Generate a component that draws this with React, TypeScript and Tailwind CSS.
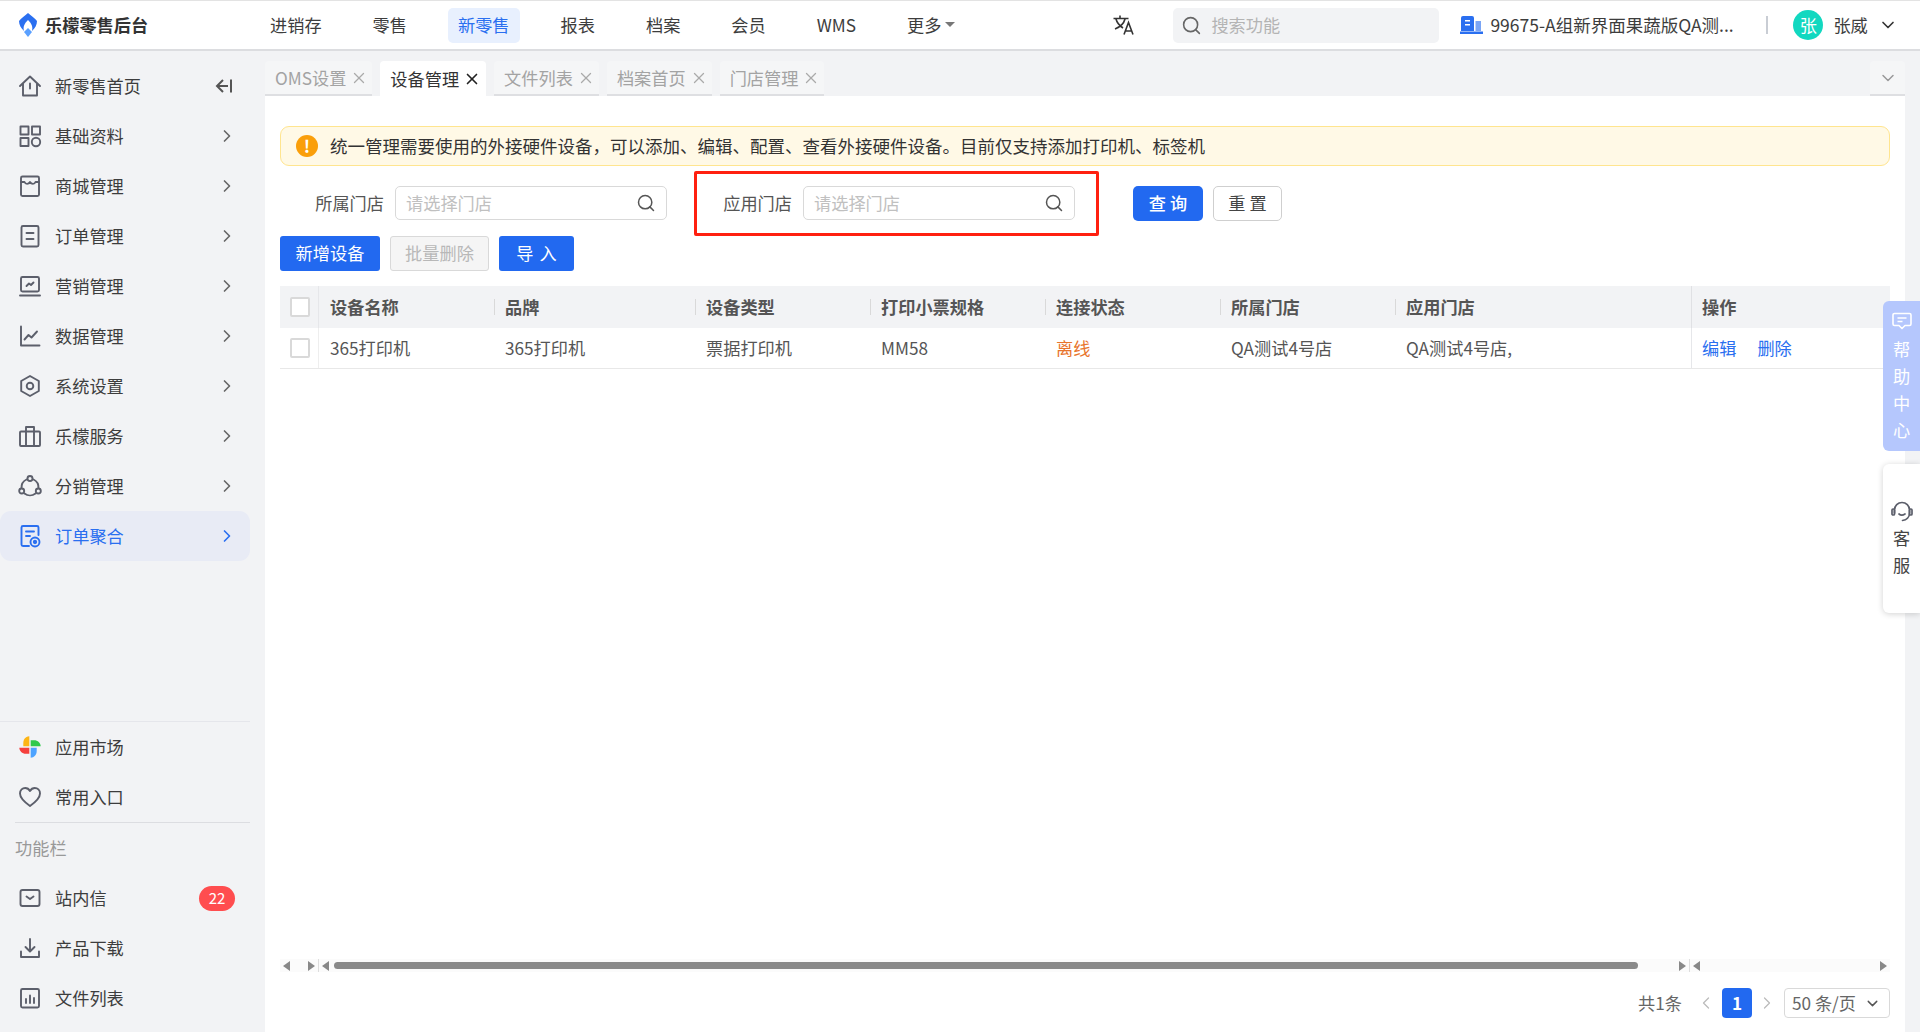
import { ReactNode } from "react";
import { ChevronDown, ChevronLeft, ChevronRight, Search, X } from "lucide-react";

const Icon = ({ children, className = "text-[#5c5f6b]", size = 24 }: { children: ReactNode; className?: string; size?: number }) => (
  <svg width={size} height={size} viewBox="0 0 24 24" fill="none" stroke="currentColor" strokeWidth="1.9" strokeLinejoin="round" strokeLinecap="round" className={className}>
    {children}
  </svg>
);

const icons: Record<string, ReactNode> = {
  home: (<><path d="M2 12 12 2.5 22 12" /><path d="M5 10v11.5h14V10" /><path d="M12 9.5v5" /></>),
  grid: (<><rect x="2.5" y="2.5" width="8" height="8" /><rect x="14" y="2.5" width="8" height="8" /><rect x="2.5" y="14" width="8" height="8" /><circle cx="18" cy="18" r="4.2" /></>),
  shop: (<><rect x="3" y="2.5" width="18" height="19.5" rx="1.5" /><path d="M3 8h3.5c1 2.5 4 2.5 5.5 0 1.5 2.5 4.5 2.5 5.5 0H21" /></>),
  order: (<><rect x="3.5" y="2" width="17" height="20.5" rx="1.5" /><path d="M8.5 9h7M8.5 15h7" /></>),
  market: (<><rect x="3" y="3" width="18" height="14.5" rx="1.5" /><path d="M2 21.5h20" /><path d="m8.5 12 2.5-2.5 2 1.5 2.5-2.5" /></>),
  data: (<><path d="M3 2.5V21.5h18.5" /><path d="m6.5 15.5 4-4.5 3 2.5 5.5-6" /></>),
  setting: (<><path d="M12 2 20.8 7v10L12 22 3.2 17V7z" /><circle cx="12" cy="12" r="3.3" /></>),
  service: (<><rect x="2" y="7.5" width="20" height="14.5" rx="1" /><path d="M8 7.5V3h8v4.5M8 7.5V22M16 7.5V22" /></>),
  share: (<><path d="M8.5 5.5a9 9 0 0 0-5 8.5M15.5 5.5a9 9 0 0 1 5 8.5M6.5 19.5a9 9 0 0 0 11 0" /><circle cx="12" cy="4.5" r="2.5" /><circle cx="3.7" cy="17" r="2.5" /><circle cx="20.3" cy="17" r="2.5" /></>),
  heart: (<path d="M12 21C5 16 2 12.5 2 8.5 2 5 4.5 3 7.2 3c2 0 3.7 1 4.8 3 1.1-2 2.8-3 4.8-3C19.5 3 22 5 22 8.5c0 4-3 7.5-10 12.5z" />),
  mail: (<><rect x="2.5" y="4" width="19" height="16" rx="2" /><path d="m8.5 10.5 3.5 2.5 3.5-2.5" /></>),
  download: (<><path d="M12 3v12M7.5 11l4.5 4.5 4.5-4.5" /><path d="M3 15.5V21h18v-5.5" /></>),
  chart: (<><rect x="3" y="3" width="18" height="18.5" rx="1.5" /><path d="M8 13v4M12 9.5V17M16 12v5" /></>),
};

const Aggregate = () => (
  <Icon className="text-[#2a6ff0]">
    <path d="M11 22H5a1.5 1.5 0 0 1-1.5-1.5v-17A1.5 1.5 0 0 1 5 2h14a1.5 1.5 0 0 1 1.5 1.5V11" />
    <path d="M8 7.5h8M8 12h4" />
    <circle cx="17" cy="18" r="4.5" />
    <circle cx="17" cy="18" r="1.2" fill="currentColor" />
  </Icon>
);

const Pinwheel = () => (
  <svg width="24" height="24" viewBox="0 0 24 24">
    <path d="M11.3 1.3C7 1.5 5.3 5 5.3 8v3.3h6z" fill="#fdb515" />
    <path d="M12.7 5.3H16c4 0 6.5 2.7 6.7 6h-10z" fill="#2fc94a" />
    <path d="M1.3 12.7h10v6H8c-4 0-6.5-2.7-6.7-6z" fill="#f5403d" />
    <path d="M12.7 12.7h6V16c0 4-2.7 6.5-6 6.7z" fill="#4da3ff" />
  </svg>
);

const menu = [
  { label: "基础资料", icon: "grid" },
  { label: "商城管理", icon: "shop" },
  { label: "订单管理", icon: "order" },
  { label: "营销管理", icon: "market" },
  { label: "数据管理", icon: "data" },
  { label: "系统设置", icon: "setting" },
  { label: "乐檬服务", icon: "service" },
  { label: "分销管理", icon: "share" },
];

const navs = ["进销存", "零售", "新零售", "报表", "档案", "会员", "WMS"];
const tabs = ["OMS设置", "设备管理", "文件列表", "档案首页", "门店管理"];

const Row = ({ icon, label, children }: { icon: ReactNode; label: string; children?: ReactNode }) => (
  <div className="flex h-[50px] w-[250px] items-center pl-[18px] pr-[13px]">
    <span className="flex w-[24px] justify-center">{icon}</span>
    <span className="ml-[13px] flex-1 text-[#3d3d3d]">{label}</span>
    {children}
  </div>
);

const Arrow = () => <ChevronRight size={20} strokeWidth={2} className="text-[#666]" />;

const Sidebar = () => (
  <aside className="flex w-[265px] shrink-0 flex-col pt-[10px]">
    <Row icon={<Icon>{icons.home}</Icon>} label="新零售首页">
      <svg width="18" height="16" viewBox="0 0 18 16" fill="none" stroke="#555" strokeWidth="2" className="mr-[4px]">
        <path d="M8 2 2 8l6 6M2 8h11M16 1.5v13" />
      </svg>
    </Row>
    {menu.map((m) => (
      <Row key={m.label} icon={<Icon>{icons[m.icon]}</Icon>} label={m.label}>
        <Arrow />
      </Row>
    ))}
    <div className="flex h-[50px] w-[250px] items-center rounded-[11px] bg-[#e8ebf5] pl-[18px] pr-[13px]">
      <span className="flex w-[24px] justify-center"><Aggregate /></span>
      <span className="ml-[13px] flex-1 text-[#2a6ff0]">订单聚合</span>
      <ChevronRight size={20} strokeWidth={2} className="text-[#2a6ff0]" />
    </div>
    <div className="mt-auto w-[250px] border-t border-[#e5e6eb]">
      <Row icon={<Pinwheel />} label="应用市场" />
      <Row icon={<Icon>{icons.heart}</Icon>} label="常用入口" />
    </div>
    <div className="ml-[15px] w-[235px] border-t border-[#dcdde1] pt-[12px] pb-[12px] leading-[26px] text-[#999]">功能栏</div>
    <Row icon={<Icon>{icons.mail}</Icon>} label="站内信">
      <span className="mr-[2px] flex h-[25px] w-[36px] items-center justify-center rounded-full bg-[#ff4d4f] text-[15px] text-white">22</span>
    </Row>
    <Row icon={<Icon>{icons.download}</Icon>} label="产品下载" />
    <div className="mb-[9px]">
      <Row icon={<Icon>{icons.chart}</Icon>} label="文件列表" />
    </div>
  </aside>
);

const Header = () => (
  <header className="flex h-[51px] shrink-0 items-center border-t border-b-2 border-t-[#e3e3e3] border-b-[#dcdde0] bg-white">
    <div className="flex w-[260px] items-center pl-[19px]">
      <svg width="18" height="24" viewBox="0 0 18 24">
        <path d="M9 0c3 3 7 5 9 8 0 4-2 7-5 10 1-4 0-7-4-11-4 4-5 7-4 11-3-3-5-6-5-10 2-3 6-5 9-8z" fill="#2a6ff0" />
        <path d="M9 15l4 4-4 5-4-5z" fill="#5aa0ff" />
      </svg>
      <span className="ml-[8px] font-bold text-[#333]">乐檬零售后台</span>
    </div>
    <nav className="flex items-center gap-[31px]">
      {navs.map((n) => (
        <span key={n} className={n === "新零售" ? "flex h-[35px] items-center rounded-[5px] bg-[#e8f0fe] px-[10px] text-[#2a6ff0]" : "flex h-[35px] items-center px-[10px] text-[#3d3d3d]"}>
          {n}
        </span>
      ))}
      <span className="flex h-[35px] items-center pl-[10px] text-[#3d3d3d]">
        更多
        <span className="ml-[4px] mt-[-2px] h-0 w-0 border-x-[5px] border-t-[5px] border-x-transparent border-t-[#777]" />
      </span>
    </nav>
    <svg width="21" height="20" viewBox="0 0 21 20" fill="none" stroke="#333" strokeWidth="1.6" className="ml-[158px]">
      <path d="M.5 3.5h15M7 .5v3M12 4c-1 4-5 8-10 10M3 4c1 4 4 7 7 9" />
      <path d="m11 19.5 4.5-12 4.5 12M12.5 16h6" />
    </svg>
    <div className="ml-[39px] flex h-[35px] w-[266px] items-center rounded-[5px] bg-[#f2f3f5] pl-[8px]">
      <Search size={21} strokeWidth={1.8} className="text-[#666]" />
      <span className="ml-[9px] text-[#b4b4b4]">搜索功能</span>
    </div>
    <svg width="23" height="18" viewBox="0 0 23 18" className="ml-[21px]">
      <path d="M1 2a2 2 0 0 1 2-2h9a2 2 0 0 1 2 2v13H1z" fill="#2a6ff0" />
      <path d="M15.5 5H21v10h-5.5z" fill="#7aa5f5" />
      <path d="M0 15.5h23V18H0z" fill="#2a6ff0" />
      <path d="M5 4h5v1.5H5zM5 8h5v1.5H5z" fill="#fff" />
    </svg>
    <span className="ml-[7px] w-[244px] text-[17.5px] text-[#3d3d3d]">99675-A组新界面果蔬版QA测...</span>
    <span className="ml-[32px] h-[18px] w-[2px] bg-[#c9cdd4]" />
    <span className="ml-[25px] flex h-[30px] w-[30px] items-center justify-center rounded-full bg-[#12d8c0] text-white">张</span>
    <span className="ml-[10px] text-[#3d3d3d]">张威</span>
    <ChevronDown size={20} strokeWidth={2} className="ml-[10px] text-[#333]" />
  </header>
);

const TabBar = () => (
  <div className="flex h-[45px] shrink-0 items-end pr-[15px]">
    <div className="flex flex-1 gap-[8px]">
      {tabs.map((t) => {
        const on = t === "设备管理";
        return (
          <div key={t} className={on ? "flex h-[35px] items-center rounded-t-[4px] bg-white pl-[10px] pr-[5px] text-[#333]" : "flex h-[35px] items-center rounded-t-[4px] border-b-2 border-[#dedfe2] bg-[#f5f6f7] pl-[10px] pr-[4px] text-[#a3a3a3]"}>
            {t}
            <X size={18} strokeWidth={on ? 2.2 : 1.7} className={on ? "ml-[4px] text-[#222]" : "ml-[4px] text-[#aaa]"} />
          </div>
        );
      })}
    </div>
    <div className="flex h-[35px] w-[35px] items-center justify-center rounded-t-[4px] border-b-2 border-[#dedfe2] bg-[#f5f6f7]">
      <ChevronDown size={20} strokeWidth={1.8} className="text-[#999]" />
    </div>
  </div>
);

const Picker = ({ label }: { label: string }) => (
  <div className="flex items-center">
    <span className="w-[104px] text-right text-[#555]">{label}</span>
    <div className="ml-[11px] flex h-[34px] w-[272px] items-center justify-between rounded-[5px] border border-[#d9d9d9] pl-[10px] pr-[10px]">
      <span className="text-[#c0c0c0]">请选择门店</span>
      <Search size={20} strokeWidth={1.8} className="text-[#555]" />
    </div>
  </div>
);

const Check = () => <span className="ml-[1px] h-[20px] w-[20px] rounded-[2px] border-2 border-[#d9d9d9] bg-white" />;

const cols = "grid grid-cols-[39px_175px_201px_175px_175px_175px_175px_296px_199px]";
const heads = ["设备名称", "品牌", "设备类型", "打印小票规格", "连接状态", "所属门店", "应用门店"];
const cells = ["365打印机", "365打印机", "票据打印机", "MM58", "离线", "QA测试4号店", "QA测试4号店,"];

const Table = () => (
  <div className="mt-[15px] w-[1610px]">
    <div className={cols + " h-[42px] items-center bg-[#f2f3f5]"}>
      <div className="flex h-full items-center justify-center border-r border-[#e6e7ea]"><Check /></div>
      {heads.map((h, i) => (
        <div key={h} className={i === 0 ? "pl-[11px] font-bold text-[#555]" : "border-l border-[#d9d9d9] pl-[10px] leading-[16px] font-bold text-[#555]"}>
          {h}
        </div>
      ))}
      <div className="flex h-full items-center border-l border-[#e0e1e4] pl-[10px]">
        <span className="font-bold text-[#555]">操作</span>
      </div>
    </div>
    <div className={cols + " h-[41px] items-center border-b border-[#e8e8e8]"}>
      <div className="flex h-full items-center justify-center border-r border-[#eeeeee]"><Check /></div>
      {cells.map((c, i) => (
        <div key={i} className={"pl-[11px] " + (c === "离线" ? "text-[#e8742c]" : "text-[#555]")}>
          {c}
        </div>
      ))}
      <div className="flex h-full items-center gap-[21px] border-l border-[#e6e7ea] pl-[10px] text-[#2a6ff0]">
        <span>编辑</span>
        <span>删除</span>
      </div>
    </div>
  </div>
);

const Tri = ({ dir }: { dir: "l" | "r" }) => (
  <span className={dir === "l" ? "block h-0 w-0 border-y-[5px] border-r-[7px] border-y-transparent border-r-[#888]" : "block h-0 w-0 border-y-[5px] border-l-[7px] border-y-transparent border-l-[#888]"} />
);

const ScrollBar = () => (
  <div className="mt-auto flex h-[13px] w-[1610px] items-center bg-[#fbfbfb]">
    <div className="flex h-full w-[39px] items-center justify-between border-r border-[#ddd] px-[3px]">
      <Tri dir="l" />
      <Tri dir="r" />
    </div>
    <div className="flex h-full w-[1371px] items-center border-r border-[#ddd] px-[3px]">
      <Tri dir="l" />
      <span className="ml-[5px] h-[7px] w-[1304px] rounded-full bg-[#8a8a8a]" />
      <span className="ml-auto"><Tri dir="r" /></span>
    </div>
    <div className="flex flex-1 items-center justify-between px-[3px]">
      <Tri dir="l" />
      <Tri dir="r" />
    </div>
  </div>
);

const Pager = () => (
  <div className="mt-[16px] mb-[14px] flex h-[30px] w-[1610px] items-center justify-end text-[#666]">
    <span>共1条</span>
    <ChevronLeft size={20} strokeWidth={1.5} className="ml-[14px] text-[#bbb]" />
    <span className="ml-[6px] flex h-[30px] w-[30px] items-center justify-center rounded-[4px] bg-[#2269f0] font-bold text-white">1</span>
    <ChevronRight size={20} strokeWidth={1.5} className="ml-[5px] text-[#bbb]" />
    <div className="ml-[7px] flex h-[30px] w-[106px] items-center justify-between rounded-[4px] border border-[#d9d9d9] pl-[7px] pr-[8px]">
      <span>50 条/页</span>
      <ChevronDown size={17} strokeWidth={2} className="text-[#555]" />
    </div>
  </div>
);

const Main = () => (
  <main className="flex min-h-0 flex-1 flex-col bg-white pl-[15px] pt-[30px]">
    <div className="flex h-[40px] w-[1610px] items-center rounded-[9px] border border-[#ffe58f] bg-[#fff9e6] pl-[15px]">
      <span className="flex h-[22px] w-[22px] items-center justify-center rounded-full bg-[#fa9f0a] font-bold text-white">!</span>
      <span className="ml-[12px] text-[17.5px] text-[#333]">统一管理需要使用的外接硬件设备，可以添加、编辑、配置、查看外接硬件设备。目前仅支持添加打印机、标签机</span>
    </div>
    <div className="mt-[20px] flex h-[34px] items-center">
      <Picker label="所属门店" />
      <div className="relative ml-[21px]">
        <Picker label="应用门店" />
        <div className="absolute left-[6px] top-[-15px] h-[65px] w-[405px] rounded-[2px] border-[3px] border-[#ff2010]" />
      </div>
      <button className="ml-[58px] h-[35px] w-[70px] rounded-[5px] bg-[#2269f0] pl-[4px] font-medium tracking-[4px] text-white">查询</button>
      <button className="ml-[10px] h-[35px] w-[69px] rounded-[5px] border border-[#cfcfcf] bg-white pl-[4px] tracking-[4px] text-[#444]">重置</button>
    </div>
    <div className="mt-[16px] flex gap-[10px]">
      <button className="h-[35px] w-[100px] rounded-[3px] bg-[#2269f0] pb-[2px] text-white">新增设备</button>
      <button className="h-[35px] w-[99px] rounded-[3px] border border-[#d9d9d9] bg-[#f5f5f5] pb-[2px] text-[#b8b8b8]">批量删除</button>
      <button className="h-[35px] w-[75px] rounded-[3px] bg-[#2269f0] pb-[2px] pl-[6px] tracking-[6px] text-white">导入</button>
    </div>
    <Table />
    <ScrollBar />
    <Pager />
  </main>
);

const Floats = () => (
  <>
    <div className="absolute right-0 top-[301px] flex h-[150px] w-[37px] flex-col items-center rounded-l-[6px] bg-[#b5c7fd] pt-[11px] text-white">
      <svg width="20" height="19" viewBox="0 0 20 19" fill="none" stroke="#fff" strokeWidth="1.6" strokeLinejoin="round">
        <path d="M2.5 1.5h15a1.5 1.5 0 0 1 1.5 1.5v9a1.5 1.5 0 0 1-1.5 1.5H13L10 16.5 7 13.5H2.5A1.5 1.5 0 0 1 1 12V3a1.5 1.5 0 0 1 1.5-1.5z" />
        <path d="M5.5 6h9M5.5 9.5h5" />
      </svg>
      <div className="mt-[9px] flex flex-col gap-[10px] leading-[17px]">
        <span>帮</span>
        <span>助</span>
        <span>中</span>
        <span>心</span>
      </div>
    </div>
    <div className="absolute right-0 top-[464px] flex h-[149px] w-[37px] flex-col items-center rounded-l-[6px] bg-white pt-[37px] text-[#444] shadow-[0_1px_6px_rgba(0,0,0,0.18)]">
      <svg width="22" height="22" viewBox="0 0 22 22" fill="none" stroke="#5c5f6b" strokeWidth="1.7" strokeLinecap="round">
        <path d="M3.5 12V9a7.5 7.5 0 0 1 15 0v3c0 4-3 7-7 7.5" />
        <path d="M8 13c1.5 1.3 4 1.3 6 0" />
        <rect x="1" y="8" width="2.5" height="6" rx="1" />
        <rect x="18.5" y="8" width="2.5" height="6" rx="1" />
      </svg>
      <div className="mt-[6px] flex flex-col gap-[10px] leading-[17px]">
        <span>客</span>
        <span>服</span>
      </div>
    </div>
  </>
);

export default function App() {
  return (
    <div className="relative flex h-screen w-full flex-col overflow-hidden bg-[#f2f3f5] text-[17.2px] [font-family:'Noto_Sans_CJK_SC','Noto_Sans',sans-serif]">
      <Header />
      <div className="flex min-h-0 flex-1">
        <Sidebar />
        <div className="flex min-w-0 flex-1 flex-col">
          <TabBar />
          <div className="flex min-h-0 flex-1 pr-[15px]">
            <Main />
          </div>
        </div>
      </div>
      <Floats />
    </div>
  );
}
